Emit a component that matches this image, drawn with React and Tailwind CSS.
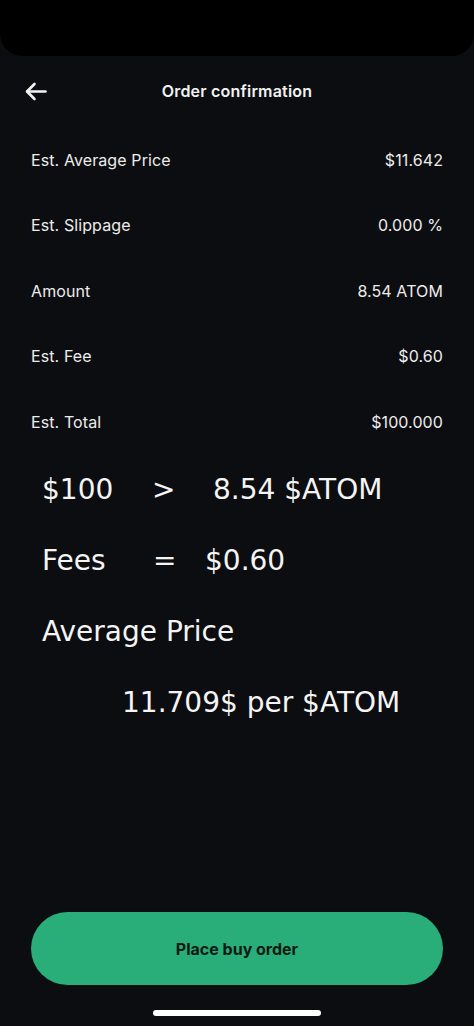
export default function App() {
  const rows = [
    ["Est. Average Price", "$11.642"],
    ["Est. Slippage", "0.000 %"],
    ["Amount", "8.54 ATOM"],
    ["Est. Fee", "$0.60"],
    ["Est. Total", "$100.000"],
  ];
  const sans = { fontFamily: "Inter, 'Noto Sans', sans-serif" };
  const big = { fontFamily: "'DejaVu Sans', Verdana, sans-serif" };
  return (
    <div className="w-[474px] h-[1026px] bg-[#0c0d10] flex flex-col text-[#ececec]" style={sans}>
      <div className="h-[56px] bg-black rounded-b-[22px] shrink-0" />
      <div className="h-[71px] relative flex items-center justify-center shrink-0">
        <svg className="absolute left-[25px] top-[26px]" width="22" height="19" viewBox="0 0 22 19" fill="none" stroke="#f2f2f2" strokeWidth="2.6" strokeLinecap="round" strokeLinejoin="round">
          <path d="M20.5 9.5H2.5" />
          <path d="M9.5 2L2 9.5L9.5 17" />
        </svg>
        <span className="text-[16px] font-semibold text-[#f2f2f2] tracking-[0.2px] -mt-[2px]">Order confirmation</span>
      </div>
      <div className="flex flex-col px-[31px] shrink-0">
        {rows.map(([l, v]) => (
          <div key={l} className="h-[65.5px] flex items-center justify-between text-[16px] tracking-[0.1px]">
            <span>{l}</span>
            <span>{v}</span>
          </div>
        ))}
      </div>
      <div className="flex flex-col text-[28px] leading-[71px] text-[#f4f4f4] pl-[42px] -mt-[1px]" style={big}>
        <div className="flex">
          <span className="w-[110px]">$100</span>
          <span className="w-[61px]">&gt;</span>
          <span>8.54 $ATOM</span>
        </div>
        <div className="flex">
          <span className="w-[111px]">Fees</span>
          <span className="w-[52px]">=</span>
          <span>$0.60</span>
        </div>
        <div>Average Price</div>
        <div className="pl-[80px]">11.709$ per $ATOM</div>
      </div>
      <div className="mt-auto px-[31px]">
        <button className="w-full h-[73px] rounded-full bg-[#29ae79] text-[#0b1a12] text-[16px] font-bold flex items-center justify-center">
          Place buy order
        </button>
      </div>
      <div className="flex justify-center pt-[25px] pb-[10px]">
        <div className="w-[168px] h-[6px] rounded-full bg-white" />
      </div>
    </div>
  );
}
